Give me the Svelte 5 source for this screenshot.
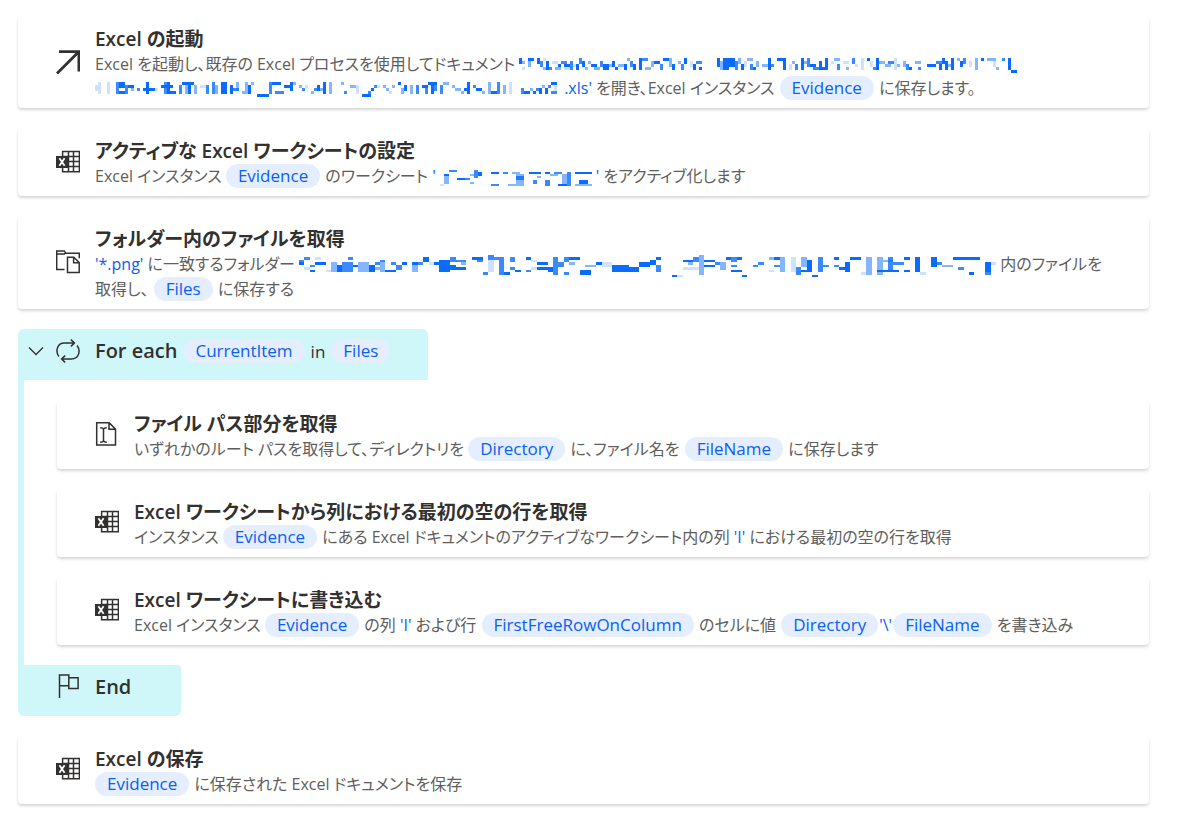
<script lang="ts">
	type Part = { kind: 'text' | 'value' | 'chip' | 'mask' | 'break'; text?: string };
	type Action = { icon: string; title: string; parts: Part[] };

	const text = (t: string): Part => ({ kind: 'text', text: t });
	const value = (t: string): Part => ({ kind: 'value', text: t });
	const chip = (t: string): Part => ({ kind: 'chip', text: t });
	const mask = (t: string): Part => ({ kind: 'mask', text: t });
	const br: Part = { kind: 'break' };

	const before: Action[] = [
		{
			icon: 'launch',
			title: 'Excel の起動',
			parts: [
				text('Excel を起動し、既存の Excel プロセスを使用してドキュメント '),
				mask('document'),
				br,
				mask('path'),
				value(" .xls'"),
				text(' を開き、Excel インスタンス '),
				chip('Evidence'),
				text(' に保存します。')
			]
		},
		{
			icon: 'excel',
			title: 'アクティブな Excel ワークシートの設定',
			parts: [
				text('Excel インスタンス '),
				chip('Evidence'),
				text(' のワークシート '),
				value("'"),
				mask('sheet'),
				value("'"),
				text(' をアクティブ化します')
			]
		},
		{
			icon: 'folder',
			title: 'フォルダー内のファイルを取得',
			parts: [
				value("'*.png'"),
				text(' に一致するフォルダー '),
				mask('folder'),
				text(' 内のファイルを'),
				br,
				text('取得し、 '),
				chip('Files'),
				text(' に保存する')
			]
		}
	];

	const looped: Action[] = [
		{
			icon: 'path',
			title: 'ファイル パス部分を取得',
			parts: [
				text('いずれかのルート パスを取得して、ディレクトリを '),
				chip('Directory'),
				text(' に、ファイル名を '),
				chip('FileName'),
				text(' に保存します')
			]
		},
		{
			icon: 'excel',
			title: 'Excel ワークシートから列における最初の空の行を取得',
			parts: [
				text('インスタンス '),
				chip('Evidence'),
				text(' にある Excel ドキュメントのアクティブなワークシート内の列 '),
				value("'I'"),
				text(' における最初の空の行を取得')
			]
		},
		{
			icon: 'excel',
			title: 'Excel ワークシートに書き込む',
			parts: [
				text('Excel インスタンス '),
				chip('Evidence'),
				text(' の列 '),
				value("'I'"),
				text(' および行 '),
				chip('FirstFreeRowOnColumn'),
				text(' のセルに値 '),
				chip('Directory'),
				value("'\\'"),
				chip('FileName'),
				text(' を書き込み')
			]
		}
	];

	const after: Action[] = [
		{
			icon: 'excel',
			title: 'Excel の保存',
			parts: [chip('Evidence'), text(' に保存された Excel ドキュメントを保存')]
		}
	];

	// Mosaic cells: column, row, width, height, strength (1-4)
	const masks: Record<string, { cols: number; rows: number; cells: string }> = {
		document: {
			cols: 166,
			rows: 5,
			cells:
				'0 0 1 2 4,1 1 1 1 2,1 3 1 1 1,3 0 2 1 4,3 1 1 2 2,6 0 1 2 4,7 1 1 2 3,8 0 1 1 1,8 3 1 1 2,9 1 1 3 4,10 3 1 1 3,11 1 2 1 1,12 3 2 1 2,13 2 1 1 4,14 1 2 1 3,15 2 2 1 4,15 3 2 1 1,17 1 1 3 3,18 2 1 1 1,19 2 1 2 4,20 0 1 2 3,21 1 1 2 4,22 3 1 1 2,23 1 1 1 2,24 2 2 1 4,25 3 2 1 2,27 1 1 2 3,28 2 2 2 4,30 2 1 1 2,31 1 1 2 4,32 3 1 1 4,33 2 2 1 2,35 2 1 2 4,36 0 1 1 2,37 1 1 2 3,38 2 1 2 4,40 0 1 4 4,41 0 2 1 3,42 3 2 1 2,44 1 1 2 2,45 1 2 1 4,47 2 1 2 3,48 0 2 1 4,50 0 1 3 2,51 2 1 2 4,53 1 1 1 2,54 2 1 2 3,55 0 1 2 4,57 1 1 2 1,58 2 1 2 4,59 1 2 1 3,60 3 1 1 4,' +
				'66 0 1 3 4,67 1 1 3 2,68 0 2 4 4,70 0 2 3 4,72 1 1 3 3,73 0 1 2 2,74 2 1 2 4,75 1 1 2 1,76 0 2 1 2,77 2 1 2 3,78 3 1 1 4,79 1 1 2 2,81 2 2 1 2,83 0 1 4 4,84 2 1 1 3,86 0 3 1 4,88 1 1 3 4,90 2 1 2 1,91 1 1 1 2,92 2 1 2 3,94 0 1 4 4,95 1 1 1 2,96 0 1 3 3,97 2 2 1 4,98 3 2 1 3,100 1 1 3 4,101 3 2 1 4,102 0 1 4 4,104 1 1 1 1,105 0 2 1 2,106 2 1 2 3,108 1 2 1 1,109 3 1 1 2,111 0 1 2 3,112 2 1 1 1,114 0 1 4 1,116 0 1 1 4,117 1 1 2 1,118 3 1 1 3,119 0 1 4 4,120 1 2 1 2,122 2 2 1 2,123 1 2 1 3,125 0 1 4 1,126 2 1 1 2,128 1 1 2 2,129 2 1 2 3,130 3 1 1 4,132 1 2 1 2,133 3 1 1 3,136 2 2 1 4,138 2 1 1 4,139 1 2 1 3,140 2 1 2 4,141 0 1 2 4,142 1 1 3 4,143 2 1 1 2,144 0 1 4 4,146 0 1 1 2,147 1 1 2 4,148 0 1 2 3,150 1 1 2 1,152 0 1 4 2,154 0 1 1 4,156 0 3 1 2,158 1 1 2 1,159 3 1 1 2,161 0 1 1 3,163 0 1 4 4,164 4 2 1 4'
		},
		path: {
			cols: 155,
			rows: 5,
			cells:
				'0 1 1 2 1,1 0 1 4 1,4 0 1 4 1,7 0 1 4 3,8 0 2 2 4,8 3 2 1 4,10 1 1 3 3,11 1 2 1 4,12 2 1 1 2,14 2 1 1 3,16 2 2 1 4,17 0 1 4 4,18 2 2 1 4,20 2 1 1 1,22 1 4 1 4,23 0 1 4 3,24 0 1 4 4,25 3 2 1 4,28 1 1 3 3,29 0 4 1 4,30 1 1 3 2,31 1 1 3 4,33 1 1 3 2,35 1 2 1 1,37 1 1 3 3,39 0 1 4 3,40 1 1 3 2,42 0 2 4 4,43 1 1 2 2,45 1 1 3 4,46 2 2 1 3,47 0 1 3 2,49 3 1 1 2,50 0 1 4 2,51 1 1 3 4,52 0 1 1 2,54 4 4 1 4,58 0 1 4 3,59 0 3 1 4,60 3 3 1 3,63 1 3 1 4,65 0 1 3 4,66 0 1 1 2,68 1 1 1 2,69 2 1 1 3,70 1 1 1 1,72 3 1 1 2,73 2 1 1 3,74 1 1 2 4,75 2 2 1 2,76 0 1 4 4,78 0 1 4 2,' +
				'82 0 1 1 2,83 3 1 1 3,85 1 2 1 2,87 1 1 3 1,89 4 3 1 4,91 3 1 1 3,92 2 1 1 4,93 1 1 1 3,94 1 1 1 1,96 1 1 1 2,97 2 1 1 2,98 3 1 1 1,99 1 1 1 2,101 0 1 1 4,102 2 1 2 2,103 1 1 2 4,105 1 1 3 2,107 1 1 3 3,109 1 2 1 4,110 2 1 2 3,111 0 3 1 4,112 1 1 3 4,113 1 1 2 3,115 1 1 3 3,116 0 2 1 2,119 1 1 1 2,120 2 2 1 2,122 3 1 1 2,123 2 1 1 4,124 0 1 4 4,126 1 1 1 3,127 2 2 1 4,129 3 1 1 2,131 0 1 4 2,132 3 2 1 4,134 0 1 4 3,136 1 1 3 2,138 0 1 4 1,142 2 1 2 3,143 3 2 1 4,145 2 1 1 2,146 3 1 1 4,147 2 1 1 3,148 2 1 2 4,149 1 1 1 2,150 2 1 2 4,151 1 1 1 3,152 0 2 1 4,152 3 2 1 3,153 1 1 2 1'
		},
		sheet: {
			cols: 38,
			rows: 8,
			cells:
				'1 7 1 1 1,2 3 1 4 2,2 2 1 1 4,3 0 2 1 3,5 4 2 1 4,7 4 1 1 3,8 2 1 1 2,8 6 1 1 2,9 0 1 4 3,10 1 1 2 4,13 1 2 1 4,13 7 2 1 3,16 1 1 1 3,18 1 2 1 2,19 2 2 6 2,19 3 2 2 3,17 7 2 1 2,22 1 3 1 4,24 3 1 1 2,23 5 1 2 3,26 1 1 1 4,26 5 1 3 3,27 2 2 1 2,28 1 2 1 3,30 2 1 5 2,31 1 1 7 3,29 7 2 1 4,33 1 4 1 4,34 5 2 2 4,33 7 4 1 2'
		},
		folder: {
			cols: 129,
			rows: 9,
			cells:
				'0 2 1 1 3,0 3 1 1 4,1 1 1 1 3,2 6 1 1 4,1 5 1 1 1,2 4 1 1 3,3 3 2 1 4,3 1 1 1 1,5 6 1 1 1,6 3 1 4 2,7 4 1 3 4,8 3 1 4 3,9 1 1 1 3,9 3 1 4 3,10 4 1 1 4,11 3 2 4 2,13 4 1 3 4,14 3 1 1 3,14 5 1 1 2,15 2 1 1 3,15 3 1 4 2,16 6 2 1 4,17 3 1 1 3,18 4 1 2 3,19 3 1 1 4,21 3 1 1 4,21 4 1 3 2,22 3 1 1 3,23 1 1 2 4,24 3 1 1 1,25 3 1 1 4,26 2 2 5 4,28 1 1 2 3,28 4 1 2 4,29 2 2 1 3,29 5 2 1 4,30 3 1 1 2,32 1 2 1 4,33 2 1 1 3,34 7 1 1 3,35 0 1 2 3,35 2 1 5 1,36 1 1 1 3,37 1 1 7 3,38 7 1 1 4,39 1 1 2 3,39 5 1 1 3,40 6 1 1 4,42 1 1 1 4,42 6 1 1 3,43 2 1 1 1,43 5 1 1 1,44 3 2 1 4,44 5 2 1 4,46 5 1 2 4,47 1 1 7 3,48 3 1 2 3,49 1 1 2 3,49 7 1 1 3,50 1 2 1 4,50 3 1 1 2,' +
				'52 6 2 2 4,53 4 2 1 2,55 3 1 1 4,56 3 2 2 1,58 4 1 3 4,59 4 2 3 4,61 5 2 2 4,63 3 2 2 4,65 2 1 2 4,66 1 1 1 4,66 4 1 3 3,69 8 1 1 4,70 8 1 1 1,71 2 2 1 4,71 5 3 1 1,72 3 1 1 2,73 1 1 2 3,74 0 1 8 2,75 2 2 1 4,75 4 2 1 4,77 3 1 1 3,78 3 1 3 2,79 1 1 1 4,80 1 1 2 3,80 6 2 1 4,81 1 1 1 4,80 4 1 1 3,82 8 1 1 4,84 4 1 1 3,85 3 1 1 3,87 1 1 1 2,87 6 1 1 1,88 1 1 1 4,88 4 1 1 3,89 1 1 6 2,91 1 1 6 1,92 5 1 3 3,93 1 1 4 2,93 6 1 1 4,94 2 1 5 4,95 8 1 1 4,96 1 1 6 3,97 4 1 1 3,99 1 1 1 4,99 4 1 1 3,100 5 1 1 4,101 3 1 4 4,102 1 2 1 4,104 7 1 1 1,105 1 1 7 2,107 1 1 7 2,107 6 4 1 4,108 2 2 1 2,109 1 1 5 3,110 3 2 1 3,112 1 1 1 4,112 6 1 1 4,114 1 1 6 4,115 7 1 1 1,117 1 1 4 4,118 3 1 1 3,119 4 2 1 2,121 1 5 1 4,122 5 1 1 3,124 7 1 1 4,127 3 1 4 4,127 7 1 1 3,128 3 1 1 1'
		}
	};

	const strength = [0, 0.2, 0.5, 0.8, 1];

	function cellsOf(name: string) {
		return masks[name].cells.split(',').map((c) => c.split(' ').map(Number));
	}
</script>

{#snippet icon(name: string)}
	<svg class="icon" viewBox="0 0 24 24" aria-hidden="true">
		{#if name === 'launch'}
			<path d="M1 23.500 22.500 2M3 1.600h19.900v19.900" stroke-width="2.8" />
		{:else if name === 'excel'}
			<path d="M6.600 6V1.600h16.800v20.200H6.600V17M12.500 1.600v20.200M17.500 1.600v20.200M6.600 6.600h16.800M12 11.600h11.400M6.600 16.600h16.800" />
			<rect class="solid" x="0" y="6" width="12" height="12" />
			<path class="knock" d="M3.400 8.300 8.600 15.700M8.600 8.300 3.400 15.700" />
		{:else if name === 'folder'}
			<path d="M8.500 19.400H.7V.9h7.500l1.600 2.300h13.500v5M.7 4h7.500l1.600-.8M11.500 7.200h6.300l5.400 5.300v10H11.500zM17.600 7.400v5.300h5.400" />
		{:else if name === 'path'}
			<path d="M1.700.8h12.500l6.300 6.300v15.900H1.700zM14 .8v6.500h6.500M5.200 5.700q3.300 0 3.300 1.800v11q0 1.700-3.300 1.700M11.800 5.700q-3.300 0-3.300 1.800v11q0 1.700 3.300 1.700" />
		{:else if name === 'loop'}
			<path d="M2.900 17.500C-.8 12.500.9 4 8.500 4h9.300M14.900.6l3.500 3.400-3.500 3.400M21.100 6.500C24.800 11.500 23.100 20 15.500 20H6.200M9.100 23.400 5.600 20l3.500-3.400" />
		{:else}
			<path d="M3.500 24V.9h9.300v10.800H3.500M12.800 3.800h9.300v10.700h-9.300v-2.800" />
		{/if}
	</svg>
{/snippet}

{#snippet card(action: Action)}
	<article class="card">
		{@render icon(action.icon)}
		<div class="body">
			<h2>{action.title}</h2>
			<p>{#each action.parts as part}{#if part.kind === 'chip'}<button class="chip" type="button">{part.text}</button>{:else if part.kind === 'value'}<span class="value">{part.text}</span>{:else if part.kind === 'break'}<br />{:else if part.kind === 'mask'}{@const name = part.text ?? ''}<svg class="mask {name}" viewBox="0 0 {masks[name].cols} {masks[name].rows}" preserveAspectRatio="none" aria-hidden="true">{#each cellsOf(name) as [x, y, width, height, level]}<rect {x} {y} {width} {height} opacity={strength[level]} />{/each}</svg>{:else}{part.text}{/if}{/each}</p>
		</div>
	</article>
{/snippet}

<main class="flow">
	{#each before as action}
		{@render card(action)}
	{/each}

	<section class="block">
		<header class="block-head">
			<button class="toggle" type="button" aria-label="For each" aria-expanded="true">
				<svg viewBox="0 0 16 16" aria-hidden="true"><path d="M1 4.500 8 11.500 15 4.500" /></svg>
			</button>
			{@render icon('loop')}
			<h2>For each</h2>
			<button class="chip" type="button">CurrentItem</button>
			<span class="in">in</span>
			<button class="chip" type="button">Files</button>
		</header>
		<div class="block-body">
			{#each looped as action}
				{@render card(action)}
			{/each}
		</div>
		<footer class="block-end">
			{@render icon('flag')}
			<h2>End</h2>
		</footer>
	</section>

	{#each after as action}
		{@render card(action)}
	{/each}
</main>

<style>
	:global(body) {
		background: #fff;
	}

	.flow {
		display: flex;
		flex-direction: column;
		gap: 20px;
		padding: 16px 29px 18px 18px;
		font-family: 'Open Sans', 'Noto Sans CJK JP', sans-serif;
		font-size: 17px;
		font-feature-settings: 'palt';
		color: #605e5c;
	}

	h2,
	p {
		margin: 0;
	}

	h2 {
		font-size: 20px;
		line-height: 26px;
		font-weight: 600;
		color: #323130;
		white-space: nowrap;
	}

	p {
		font-size: 16px;
		line-height: 24px;
		white-space: pre;
	}

	.card {
		display: flex;
		align-items: center;
		gap: 15px;
		padding: 10px 16px 8px 38px;
		border-radius: 4px;
		background: #fff;
		box-shadow: 0 2px 3px rgba(0, 0, 0, 0.16);
	}

	.card h2 {
		font-size: 19px;
	}

	.card .icon {
		margin-bottom: 3px;
	}

	.body {
		min-width: 0;
	}

	.value {
		color: #0a60f0;
	}

	.chip {
		display: inline-block;
		height: 24px;
		margin: 0 1px;
		padding: 0 12px;
		border: none;
		border-radius: 12px;
		background: #e5eeff;
		color: #0a60f0;
		font: inherit;
		font-size: 17px;
		line-height: 24px;
		vertical-align: top;
		cursor: pointer;
	}

	p .chip:first-child {
		margin-left: 0;
	}

	.icon {
		width: 24px;
		height: 24px;
		flex-shrink: 0;
		fill: none;
		stroke: #323130;
		stroke-width: 1.5;
	}

	.icon .solid {
		fill: #323130;
		stroke: none;
	}

	.icon .knock {
		stroke: #fff;
		stroke-width: 1.8;
	}

	/* Mosaic over private paths */
	.mask {
		fill: #0a6cff;
		shape-rendering: crispEdges;
		vertical-align: middle;
	}

	.mask.document {
		width: 498px;
		height: 15px;
	}

	.mask.path {
		width: 465px;
		height: 15px;
	}

	.mask.sheet {
		width: 160px;
		height: 16px;
	}

	.mask.folder {
		width: 697px;
		height: 22px;
	}

	/* Loop block */
	.block-head,
	.block-end {
		display: flex;
		width: fit-content;
		background: #cff6f8;
	}

	.block-head {
		align-items: center;
		box-sizing: border-box;
		min-width: 410px;
		height: 51px;
		padding: 0 30px 6px 10px;
		border-radius: 6px 6px 0 0;
	}

	.block-head .icon {
		margin: 0 15px 0 12px;
	}

	.block-head .chip {
		margin: 0 6px;
	}

	.in {
		color: #323130;
	}

	.toggle {
		display: flex;
		padding: 0;
		border: none;
		background: none;
		cursor: pointer;
	}

	.toggle svg {
		width: 16px;
		height: 16px;
		fill: none;
		stroke: #323130;
		stroke-width: 1.3;
	}

	.block-body {
		display: flex;
		flex-direction: column;
		gap: 20px;
		padding: 21px 0 20px 33px;
		border-left: 6px solid #cff6f8;
	}

	.block-end {
		gap: 15px;
		padding: 9px 50px 16px 38px;
		border-radius: 0 4px 6px 6px;
	}
</style>
